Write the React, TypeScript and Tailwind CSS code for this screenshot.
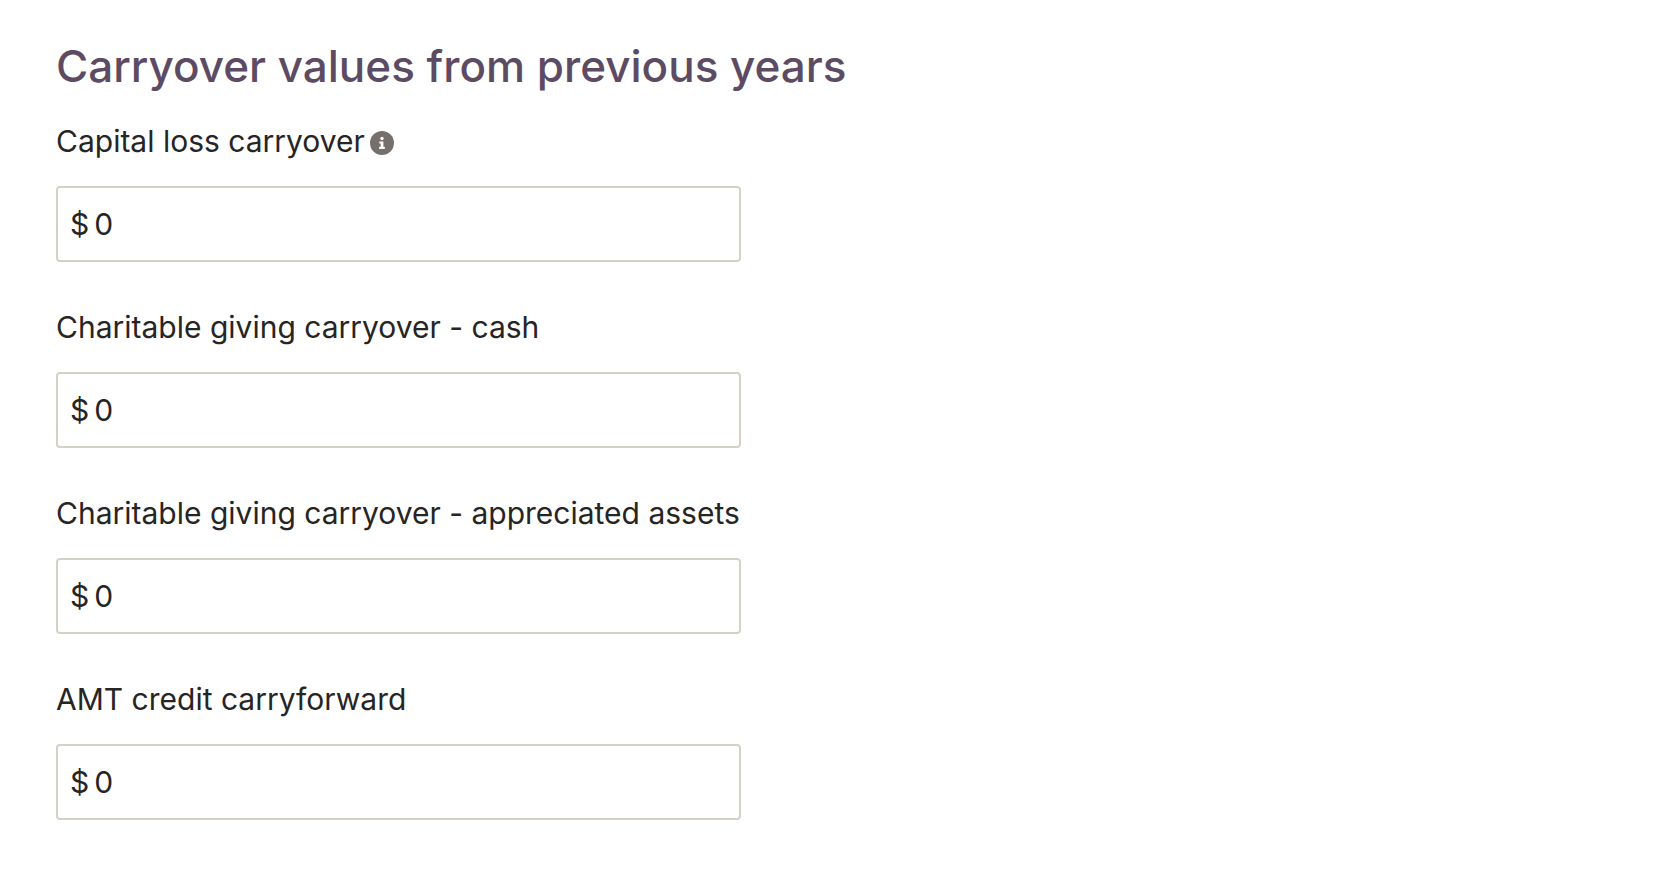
import { useState } from "react";

type Field = { id: string; label: string; info?: string };

const fields: Field[] = [
  { id: "capital-loss", label: "Capital loss carryover", info: "About capital loss carryover" },
  { id: "charitable-cash", label: "Charitable giving carryover - cash" },
  { id: "charitable-assets", label: "Charitable giving carryover - appreciated assets" },
  { id: "amt-credit", label: "AMT credit carryforward" },
];

function InfoIcon() {
  return (
    <svg viewBox="0 0 24 24" className="size-6" aria-hidden="true">
      <circle cx="12" cy="12" r="12" fill="#76706c" />
      <circle cx="12" cy="7.5" r="1.7" fill="#fff" />
      <path d="M9.3 10.4h4.1v5.3h1.4v2.2H9.2v-2.2h1.5v-3.1H9.3z" fill="#fff" />
    </svg>
  );
}

function MoneyField({ id, label, info }: Field) {
  const [value, setValue] = useState("0");
  return (
    <div className="flex flex-col gap-[25px]">
      <div className="flex items-center gap-[5px]">
        <label htmlFor={id} className="whitespace-nowrap leading-10">
          {label}
        </label>
        {info && (
          <button type="button" aria-label={info} className="mt-1 rounded-full">
            <InfoIcon />
          </button>
        )}
      </div>
      <div className="flex items-center gap-[5px] rounded border-2 border-[#d6d1c6] bg-white px-3 py-4">
        <span className="leading-10">$</span>
        <input
          id={id}
          type="text"
          inputMode="numeric"
          value={value}
          onChange={(e) => setValue(e.target.value)}
          className="h-10 min-w-0 flex-1 bg-transparent outline-none"
        />
      </div>
    </div>
  );
}

export default function App() {
  return (
    <main className="min-h-screen bg-white px-14 pt-[38px] pb-14 font-['Inter',sans-serif] text-[30px] text-[#272424]">
      <h1 className="mb-[27px] text-[44px] leading-14 font-medium text-[#5c4b63]">
        Carryover values from previous years
      </h1>
      <form className="flex w-full max-w-[685px] flex-col gap-[45px]">
        {fields.map((field) => (
          <MoneyField key={field.id} {...field} />
        ))}
      </form>
    </main>
  );
}
